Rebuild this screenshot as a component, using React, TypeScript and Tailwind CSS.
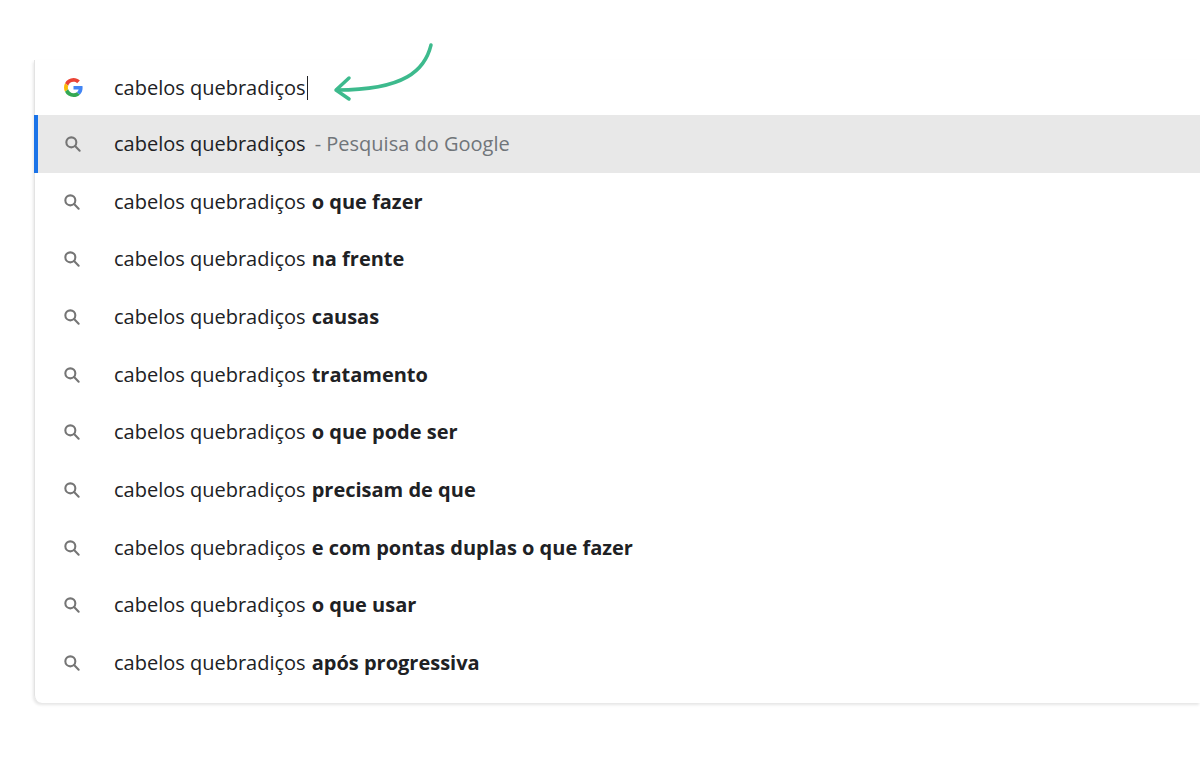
const ROWS = [
  "o que fazer",
  "na frente",
  "causas",
  "tratamento",
  "o que pode ser",
  "precisam de que",
  "e com pontas duplas o que fazer",
  "o que usar",
  "após progressiva",
]

function SearchIcon() {
  return (
    <svg width="20" height="20" viewBox="0 0 24 24" fill="none" stroke="#757575" strokeWidth={2.5} strokeLinecap="round">
      <circle cx="10" cy="10" r="6" />
      <path d="M14.5 14.5 L20 20" />
    </svg>
  )
}

function GoogleG() {
  return (
    <svg width="19" height="19" viewBox="0 0 48 48">
      <path fill="#EA4335" d="M24 9.5c3.54 0 6.71 1.22 9.21 3.6l6.85-6.850C35.9 2.38 30.470 0 24 0 14.62 0 6.51 5.38 2.56 13.22l7.98 6.19C12.43 13.72 17.74 9.5 24 9.5z" />
      <path fill="#4285F4" d="M46.98 24.55c0-1.57-.15-3.09-.38-4.55H24v9.02h12.94c-.58 2.96-2.26 5.48-4.78 7.18l7.73 6c4.51-4.18 7.09-10.36 7.090-17.65z" />
      <path fill="#FBBC05" d="M10.53 28.59c-.48-1.45-.76-2.99-.76-4.59s.27-3.14.76-4.59l-7.98-6.19C.92 16.46 0 20.12 0 24c0 3.88.92 7.54 2.56 10.78l7.97-6.19z" />
      <path fill="#34A853" d="M24 48c6.48 0 11.93-2.13 15.89-5.81l-7.73-6c-2.15 1.45-4.92 2.3-8.16 2.3-6.26 0-11.57-4.22-13.47-9.91l-7.98 6.19C6.51 42.62 14.62 48 24 48z" />
    </svg>
  )
}

export default function App() {
  return (
    <div className="relative w-[1200px] h-[768px] bg-white overflow-hidden" style={{ fontFamily: '"Open Sans", "Noto Sans", sans-serif' }}>
      <div className="ml-[34px] mt-[60px] w-[1166px] rounded-bl-[8px] border-l border-[#e3e3e3] shadow-[-1px_2px_3px_rgba(0,0,0,0.10)] pb-[11px] text-[20px] text-[#202124]">
        <div className="flex items-center h-[55px]">
          <div className="w-[79px] flex justify-center pr-[2px]"><GoogleG /></div>
          <span>cabelos quebradiços</span>
          <span className="inline-block w-[1px] h-[24px] bg-[#202124] ml-[1px]" />
        </div>
        <div className="flex items-center h-[57.7px] bg-[#e8e8e8] border-l-4 border-[#1a73e8] -ml-[1px]">
          <div className="w-[76px] flex justify-center pr-[6px]"><SearchIcon /></div>
          <span>cabelos quebradiços</span>
          <span className="ml-[9px] text-[#70757a]">- Pesquisa do Google</span>
        </div>
        {ROWS.map((r) => (
          <div key={r} className="flex items-center h-[57.7px]">
            <div className="w-[79px] flex justify-center pr-[6px]"><SearchIcon /></div>
            <span>cabelos quebradiços</span>
            <span className="ml-[6px] font-bold">{r}</span>
          </div>
        ))}
      </div>
      <svg className="absolute left-[325px] top-[40px]" width="120" height="70" viewBox="0 0 120 70" fill="none" stroke="#3dba8d" strokeWidth={3.5} strokeLinecap="round" strokeLinejoin="round">
        <path d="M106 5 C100 30 80 50 12 50" />
        <path d="M24 38 L11 50 L24 59" />
      </svg>
    </div>
  )
}
